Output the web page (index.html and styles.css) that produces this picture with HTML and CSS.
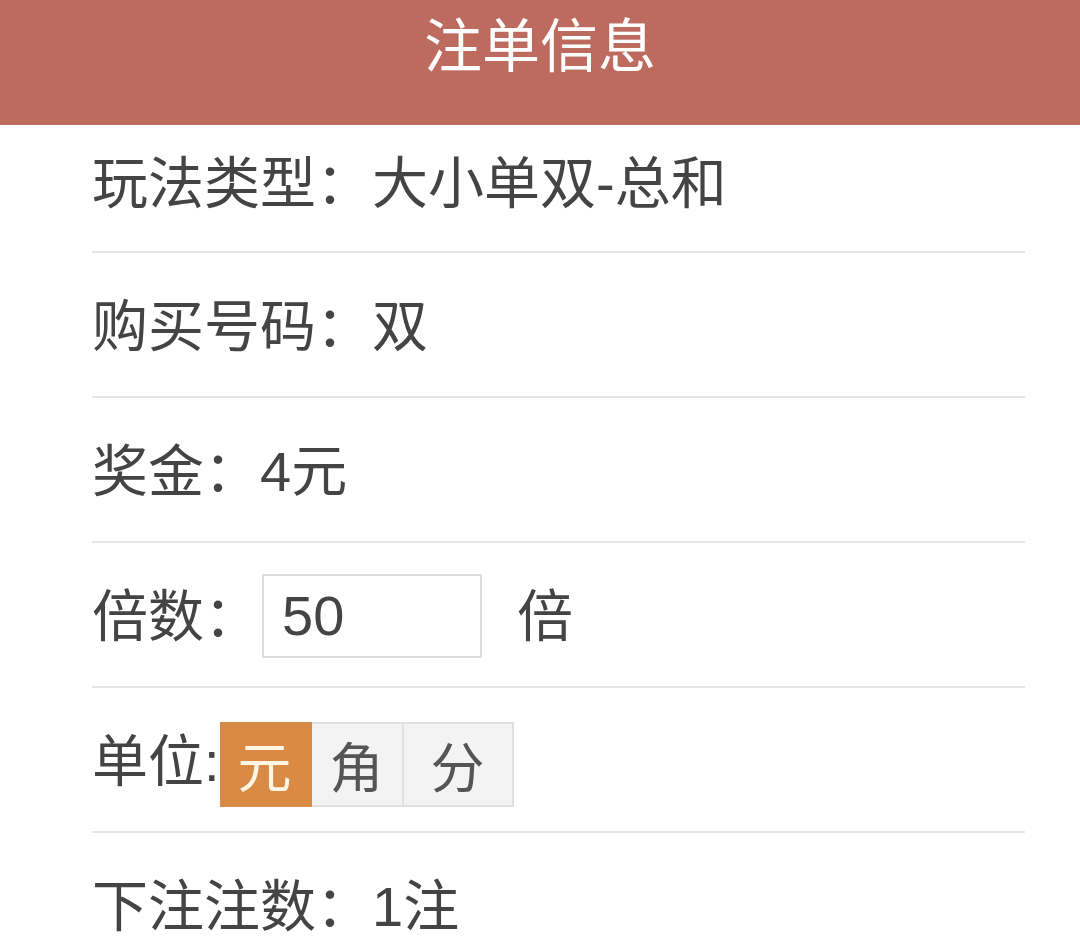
FILE: index.html
```html
<!DOCTYPE html>
<html>
<head>
  <meta charset="utf-8">
  <title>注单信息</title>
  <link rel="stylesheet" href="styles.css">
</head>
<body>
  <div class="header">注单信息</div>

  <div class="info-list">
    <div class="row">玩法类型：大小单双-总和</div>
    <div class="row">购买号码：双</div>
    <div class="row">奖金：4元</div>
    <div class="row">
      <span>倍数：</span>
      <input type="text" value="50" class="times-input">
      <span class="times-unit">倍</span>
    </div>
    <div class="row">
      <span>单位:</span>
      <div class="unit-group">
        <span class="unit-btn active">元</span>
        <span class="unit-btn">角</span>
        <span class="unit-btn last">分</span>
      </div>
    </div>
    <div class="row">下注注数：1注</div>
  </div>
</body>
</html>
```

FILE: styles.css
```css
body {
  margin: 0;
  background: #fff;
  font-family: "Liberation Sans", "Noto Sans CJK SC", sans-serif;
  color: #444;
}

.header {
  height: 125px;
  background: #bd6b5f;
  color: #fff;
  font-size: 58px;
  line-height: 94px;
  text-align: center;
}

.info-list {
  margin: 0 55px 0 92px;
}

.row {
  display: flex;
  align-items: center;
  height: 137px;
  padding-bottom: 6px;
  border-bottom: 2px solid #e6e6e6;
  font-size: 56px;
}

.row:first-child {
  height: 106px;
  padding-bottom: 20px;
}

.times-input {
  width: 198px;
  height: 80px;
  margin: 8px 0 0 2px;
  padding: 0 0 0 18px;
  border: 2px solid #dcdcdc;
  font-family: "Liberation Sans", sans-serif;
  font-size: 56px;
  color: #444;
  outline: none;
}

.times-unit {
  margin-left: 35px;
}

.unit-group {
  display: flex;
  height: 85px;
  margin-top: 16px;
}

.unit-btn {
  display: flex;
  align-items: center;
  justify-content: center;
  width: 92px;
  background: #f3f3f3;
  border: 2px solid #e0e0e0;
  border-left: none;
  box-sizing: border-box;
  font-size: 54px;
  color: #555;
}

.unit-btn.active {
  background: #d98a44;
  border-color: #d98a44;
  color: #fff6e6;
}

.unit-btn.last {
  width: 110px;
}
```
